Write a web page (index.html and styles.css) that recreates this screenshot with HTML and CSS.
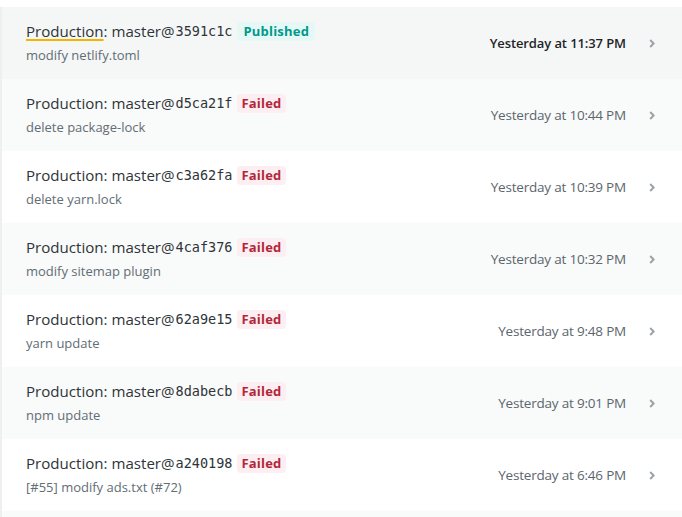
FILE: index.html
```html
<!DOCTYPE html>
<html lang="en">
<head>
<meta charset="utf-8">
<title>Deploys</title>
<link rel="stylesheet" href="styles.css">
</head>
<body>
<ul class="deploys">
  <li class="deploy current">
    <div class="info">
      <div class="title"><span class="ctx">Production</span>: master@<code>3591c1c</code><span class="badge ok">Published</span></div>
      <div class="msg">modify netlify.toml</div>
    </div>
    <div class="date">Yesterday at 11:37 PM</div>
    <svg class="chev" width="6" height="9" viewBox="0 0 6 9"><polyline points="1.2,1 4.6,4.5 1.2,8" fill="none" stroke="#9ba3a8" stroke-width="2"/></svg>
  </li>
  <li class="deploy alt">
    <div class="info">
      <div class="title">Production: master@<code>d5ca21f</code><span class="badge fail">Failed</span></div>
      <div class="msg">delete package-lock</div>
    </div>
    <div class="date">Yesterday at 10:44 PM</div>
    <svg class="chev" width="6" height="9" viewBox="0 0 6 9"><polyline points="1.2,1 4.6,4.5 1.2,8" fill="none" stroke="#9ba3a8" stroke-width="2"/></svg>
  </li>
  <li class="deploy">
    <div class="info">
      <div class="title">Production: master@<code>c3a62fa</code><span class="badge fail">Failed</span></div>
      <div class="msg">delete yarn.lock</div>
    </div>
    <div class="date">Yesterday at 10:39 PM</div>
    <svg class="chev" width="6" height="9" viewBox="0 0 6 9"><polyline points="1.2,1 4.6,4.5 1.2,8" fill="none" stroke="#9ba3a8" stroke-width="2"/></svg>
  </li>
  <li class="deploy alt">
    <div class="info">
      <div class="title">Production: master@<code>4caf376</code><span class="badge fail">Failed</span></div>
      <div class="msg">modify sitemap plugin</div>
    </div>
    <div class="date">Yesterday at 10:32 PM</div>
    <svg class="chev" width="6" height="9" viewBox="0 0 6 9"><polyline points="1.2,1 4.6,4.5 1.2,8" fill="none" stroke="#9ba3a8" stroke-width="2"/></svg>
  </li>
  <li class="deploy">
    <div class="info">
      <div class="title">Production: master@<code>62a9e15</code><span class="badge fail">Failed</span></div>
      <div class="msg">yarn update</div>
    </div>
    <div class="date">Yesterday at 9:48 PM</div>
    <svg class="chev" width="6" height="9" viewBox="0 0 6 9"><polyline points="1.2,1 4.6,4.5 1.2,8" fill="none" stroke="#9ba3a8" stroke-width="2"/></svg>
  </li>
  <li class="deploy alt">
    <div class="info">
      <div class="title">Production: master@<code>8dabecb</code><span class="badge fail">Failed</span></div>
      <div class="msg">npm update</div>
    </div>
    <div class="date">Yesterday at 9:01 PM</div>
    <svg class="chev" width="6" height="9" viewBox="0 0 6 9"><polyline points="1.2,1 4.6,4.5 1.2,8" fill="none" stroke="#9ba3a8" stroke-width="2"/></svg>
  </li>
  <li class="deploy">
    <div class="info">
      <div class="title">Production: master@<code>a240198</code><span class="badge fail">Failed</span></div>
      <div class="msg">[#55] modify ads.txt (#72)</div>
    </div>
    <div class="date">Yesterday at 6:46 PM</div>
    <svg class="chev" width="6" height="9" viewBox="0 0 6 9"><polyline points="1.2,1 4.6,4.5 1.2,8" fill="none" stroke="#9ba3a8" stroke-width="2"/></svg>
  </li>
  <li class="deploy alt"></li>
</ul>
</body>
</html>
```

FILE: styles.css
```css
html, body {
  margin: 0;
  padding: 0;
  background: #ffffff;
  overflow: hidden;
}
body {
  font-family: "Open Sans", "Noto Sans", sans-serif;
  color: #2e3438;
  padding-top: 7px;
}
.deploys {
  list-style: none;
  margin: 0;
  padding: 0;
  border-left: 2px solid #eef0f0;
}
.deploy {
  display: flex;
  align-items: center;
  height: 72px;
  padding: 0 27px 0 24px;
  background: #ffffff;
  box-sizing: border-box;
}
.deploy.alt {
  background: #f9fafa;
}
.deploy.current {
  background: #f5f7f7;
}
.info {
  flex: 1;
  display: flex;
  flex-direction: column;
  gap: 6px;
  margin-top: -1px;
}
.title {
  display: flex;
  align-items: center;
  font-size: 15.1px;
  line-height: 20px;
  color: #2e3438;
  letter-spacing: 0;
}
.ctx {
  text-decoration: underline;
  text-decoration-color: #f4b400;
  text-decoration-thickness: 2px;
  text-underline-offset: 2px;
}
code {
  font-family: "DejaVu Sans Mono", monospace;
  font-size: 13.5px;
  letter-spacing: 0;
  margin-left: 1px;
}
.badge {
  font-size: 13px;
  font-weight: 700;
  line-height: 19px;
  padding: 0 4px;
  margin-left: 5px;
  border-radius: 4px;
  letter-spacing: 0.2px;
}
.badge.ok {
  color: #00998a;
  background: #e6f8f6;
  padding: 0 6px;
}
.badge.fail {
  color: #b3263a;
  background: #fdeff1;
}
.msg {
  font-size: 13px;
  line-height: 17px;
  color: #626d74;
  letter-spacing: 0;
}
.date {
  font-size: 13.5px;
  color: #5c666d;
  letter-spacing: -0.2px;
}
.current .date {
  color: #1f2428;
  font-weight: 600;
  font-size: 13px;
  letter-spacing: -0.1px;
}
.chev {
  margin-left: 23px;
  flex: none;
}
```
